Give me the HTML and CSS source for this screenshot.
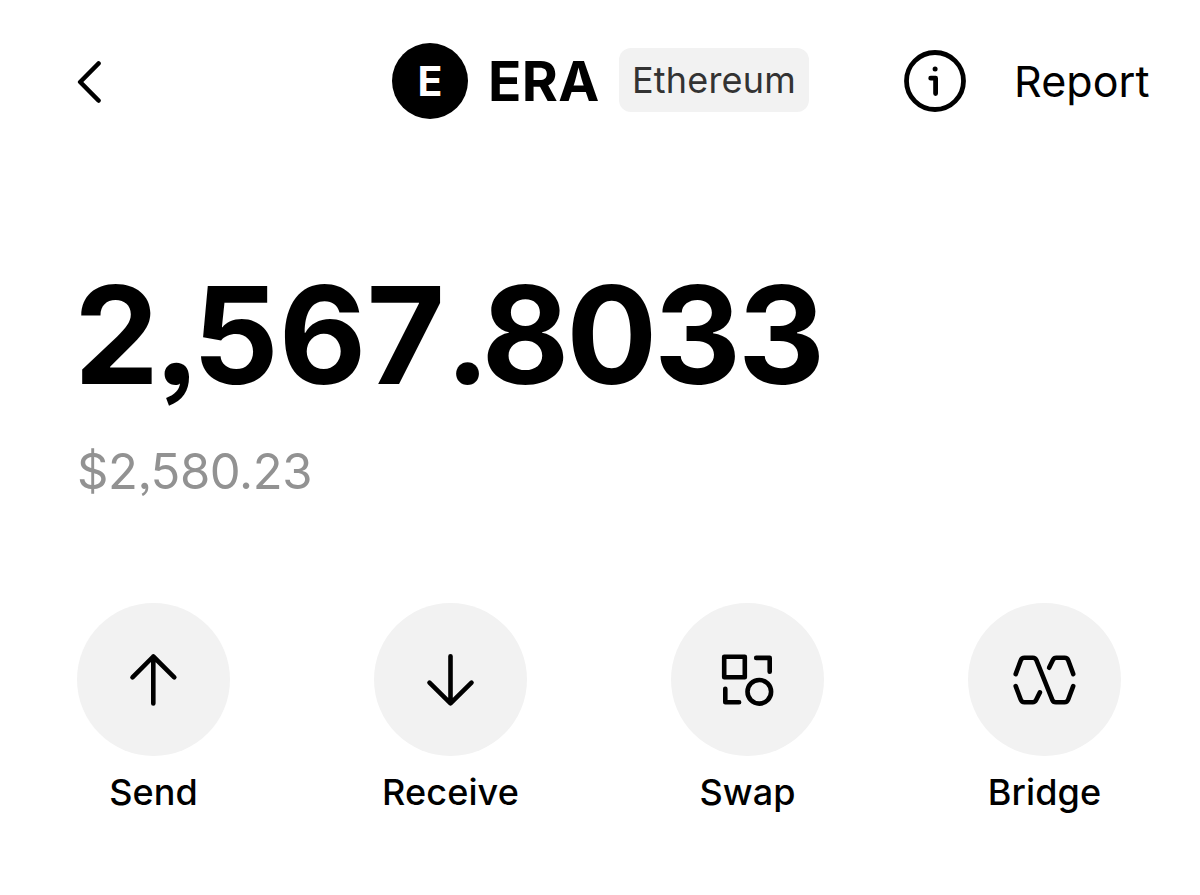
FILE: index.html
```html
<!DOCTYPE html>
<html lang="en">
<head>
    <meta charset="UTF-8">
    <title>ERA</title>
    <link rel="stylesheet" href="styles.css">
</head>
<body>
    <header class="header">
        <svg class="back" viewBox="0 0 28 46">
            <path d="M21.5 4.5L3.2 23l18.3 18.5"/>
        </svg>
        <div class="token">
            <span class="token-logo">E</span>
            <span class="token-name">ERA</span>
            <span class="network">Ethereum</span>
        </div>
        <svg class="info" viewBox="0 0 62 62">
            <circle cx="31" cy="31" r="28.5"/>
            <path d="M26.7 28.2h4.9v15.4"/>
            <circle class="dot" cx="31.1" cy="19" r="2.5"/>
        </svg>
        <span class="report">Report</span>
    </header>

    <main>
        <div class="balance">2<span class="comma">,</span><span class="whole">567</span><span class="point">.</span>8033</div>
        <div class="value">$2,580.23</div>
        <div class="actions">
            <div class="action">
                <div class="circle">
                    <svg class="icon" viewBox="0.5 0 64 64">
                        <path d="M31.8 55.5V8.5M11 29.4L31.8 8.5l21 20.9"/>
                    </svg>
                </div>
                <span class="label">Send</span>
            </div>
            <div class="action">
                <div class="circle">
                    <svg class="icon" viewBox="0.5 0 64 64">
                        <path d="M32 8.3v47M11 34.6l21 20.7 21-20.7"/>
                    </svg>
                </div>
                <span class="label">Receive</span>
            </div>
            <div class="action">
                <div class="circle">
                    <svg class="icon" viewBox="0.5 0 64 64">
                        <rect x="8.7" y="8.7" width="20.6" height="20.6"/>
                        <path d="M40.7 9.9h13.5v13.8M9.8 40.7v13.5h13.8"/>
                        <circle cx="43.8" cy="43.8" r="11.8"/>
                    </svg>
                </div>
                <span class="label">Swap</span>
            </div>
            <div class="action">
                <div class="circle">
                    <svg class="icon" viewBox="0.5 0 64 64">
                        <path d="M3.2 26.1l5-13.6q1-2.7 3.8-2.7h8.3q2.6 0 3.6 2.4l15.9 39.6q1 2.4 3.6 2.4h8.5q2.8 0 3.8-2.7l5-13.4"/>
                        <path d="M36.6 19.8l3.8-7.8q1.1-2.2 3.4-2.2H52q2.8 0 3.8 2.7l5 13.6"/>
                        <path d="M3.2 38.1l5 13.4q1 2.7 3.8 2.7h8.2q2.3 0 3.4-2.2l3.8-7.6"/>
                    </svg>
                </div>
                <span class="label">Bridge</span>
            </div>
        </div>
    </main>
</body>
</html>
```

FILE: styles.css
```css
* {
    box-sizing: border-box;
}
body {
    margin: 0;
    font-family: Inter, "Liberation Sans", sans-serif;
    background-color: #fff;
    color: #000;
}
svg {
    display: block;
    flex: none;
    fill: none;
    stroke: #000;
    stroke-width: 4.6;
    stroke-linecap: round;
    stroke-linejoin: round;
}
.header {
    display: flex;
    align-items: center;
    height: 161px;
    padding-left: 77px;
}
.back {
    width: 28px;
    height: 46px;
    margin-top: 3px;
}
.token {
    display: flex;
    align-items: center;
    width: 417px;
    margin-left: 287px;
}
.token-logo {
    width: 76px;
    height: 76px;
    border-radius: 50%;
    background-color: #000;
    color: #fff;
    font-size: 41px;
    font-weight: 700;
    line-height: 77px;
    text-align: center;
}
.token-name {
    width: 131px;
    margin-left: 20px;
    font-size: 55px;
    font-weight: 700;
    letter-spacing: 0.3px;
}
.network {
    width: 190px;
    height: 64px;
    margin-bottom: 1px;
    border-radius: 12px;
    background-color: #f2f2f2;
    color: #333;
    font-size: 36px;
    line-height: 65px;
    letter-spacing: 0.2px;
    text-align: center;
}
.info {
    width: 62px;
    height: 62px;
    margin: 1px 0 0 95px;
    stroke-width: 4.8;
}
.dot {
    fill: #000;
    stroke: none;
}
.report {
    margin-left: 48px;
    font-size: 43px;
    letter-spacing: 0.1px;
}
main {
    padding: 94px 0 0 77px;
}
.balance {
    margin-left: -3px;
    font-size: 135px;
    font-weight: 700;
    line-height: 160px;
    letter-spacing: -3.2px;
    font-kerning: none;
    font-feature-settings: "ss03";
}
.comma {
    letter-spacing: -8.5px;
}
.whole {
    letter-spacing: 0;
}
.point {
    letter-spacing: -8.5px;
}
.value {
    margin-top: 27px;
    color: #929292;
    font-size: 49px;
    line-height: 60px;
    letter-spacing: -0.4px;
    font-feature-settings: "ss03";
}
.actions {
    display: flex;
    gap: 144px;
    margin-top: 101px;
}
.action {
    display: flex;
    flex-direction: column;
    align-items: center;
    width: 153px;
}
.circle {
    display: flex;
    justify-content: center;
    align-items: center;
    width: 153px;
    height: 153px;
    border-radius: 50%;
    background-color: #f2f2f2;
}
.icon {
    width: 64px;
    height: 64px;
}
.label {
    margin-top: 14px;
    font-size: 36px;
    font-weight: 500;
    line-height: 44px;
    letter-spacing: 0.1px;
}
```
